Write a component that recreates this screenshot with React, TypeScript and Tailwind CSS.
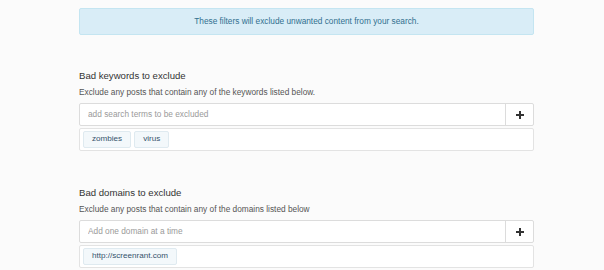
import React from 'react';

interface FilterSectionProps {
  title: string;
  description: string;
  placeholder: string;
  tags: string[];
}

const PlusIcon = () => (
  <svg width="8" height="8" viewBox="0 0 8 8" fill="#333">
    <rect x="3" y="0" width="2" height="8" />
    <rect x="0" y="3" width="8" height="2" />
  </svg>
);

const FilterSection: React.FC<FilterSectionProps> = ({ title, description, placeholder, tags }) => {
  return (
    <section className="flex flex-col">
      <h3 className="text-[9.6px] leading-[14px] text-[#333]">{title}</h3>
      <p className="mt-[3px] text-[8.3px] leading-[12px] text-[#555]">{description}</p>

      {/* Input with add button */}
      <div className="mt-[5px] flex h-[23px] border border-[#dcdcdc] bg-white rounded-[2px]">
        <input
          className="flex-1 px-[8px] text-[8.3px] text-[#555] placeholder:text-[#9a9a9a] outline-none bg-transparent"
          placeholder={placeholder}
        />
        <button className="w-[28px] flex items-center justify-center border-l border-[#dcdcdc]">
          <PlusIcon />
        </button>
      </div>

      {/* Tag list */}
      <div className="mt-[2px] flex h-[23px] items-center gap-[3px] border border-[#e3e3e3] bg-white px-[3px] rounded-[2px]">
        {tags.map((tag) => (
          <span
            key={tag}
            className="flex h-[17px] items-center px-[8px] text-[8.1px] text-[#35526b] bg-[#f3f8fb] border border-[#dfeaf0] rounded-[2px]"
          >
            {tag}
          </span>
        ))}
      </div>
    </section>
  );
};

const App: React.FC = () => {
  return (
    <div
      className="w-[604px] h-[270px] overflow-hidden bg-[#fbfbfb]"
      style={{ fontFamily: '"Liberation Sans", Arial, sans-serif' }}
    >
      <div className="ml-[79px] w-[455px] pt-[8px] flex flex-col">
        <div className="h-[27px] flex items-center justify-center bg-[#d9edf7] border border-[#c4e5f1] rounded-[2px] text-[8.3px] text-[#31708f]">
          These filters will exclude unwanted content from your search.
        </div>

        <div className="mt-[34px]">
          <FilterSection
            title="Bad keywords to exclude"
            description="Exclude any posts that contain any of the keywords listed below."
            placeholder="add search terms to be excluded"
            tags={['zombies', 'virus']}
          />
        </div>

        <div className="mt-[35px]">
          <FilterSection
            title="Bad domains to exclude"
            description="Exclude any posts that contain any of the domains listed below"
            placeholder="Add one domain at a time"
            tags={['http://screenrant.com']}
          />
        </div>
      </div>
    </div>
  );
};

export default App;
